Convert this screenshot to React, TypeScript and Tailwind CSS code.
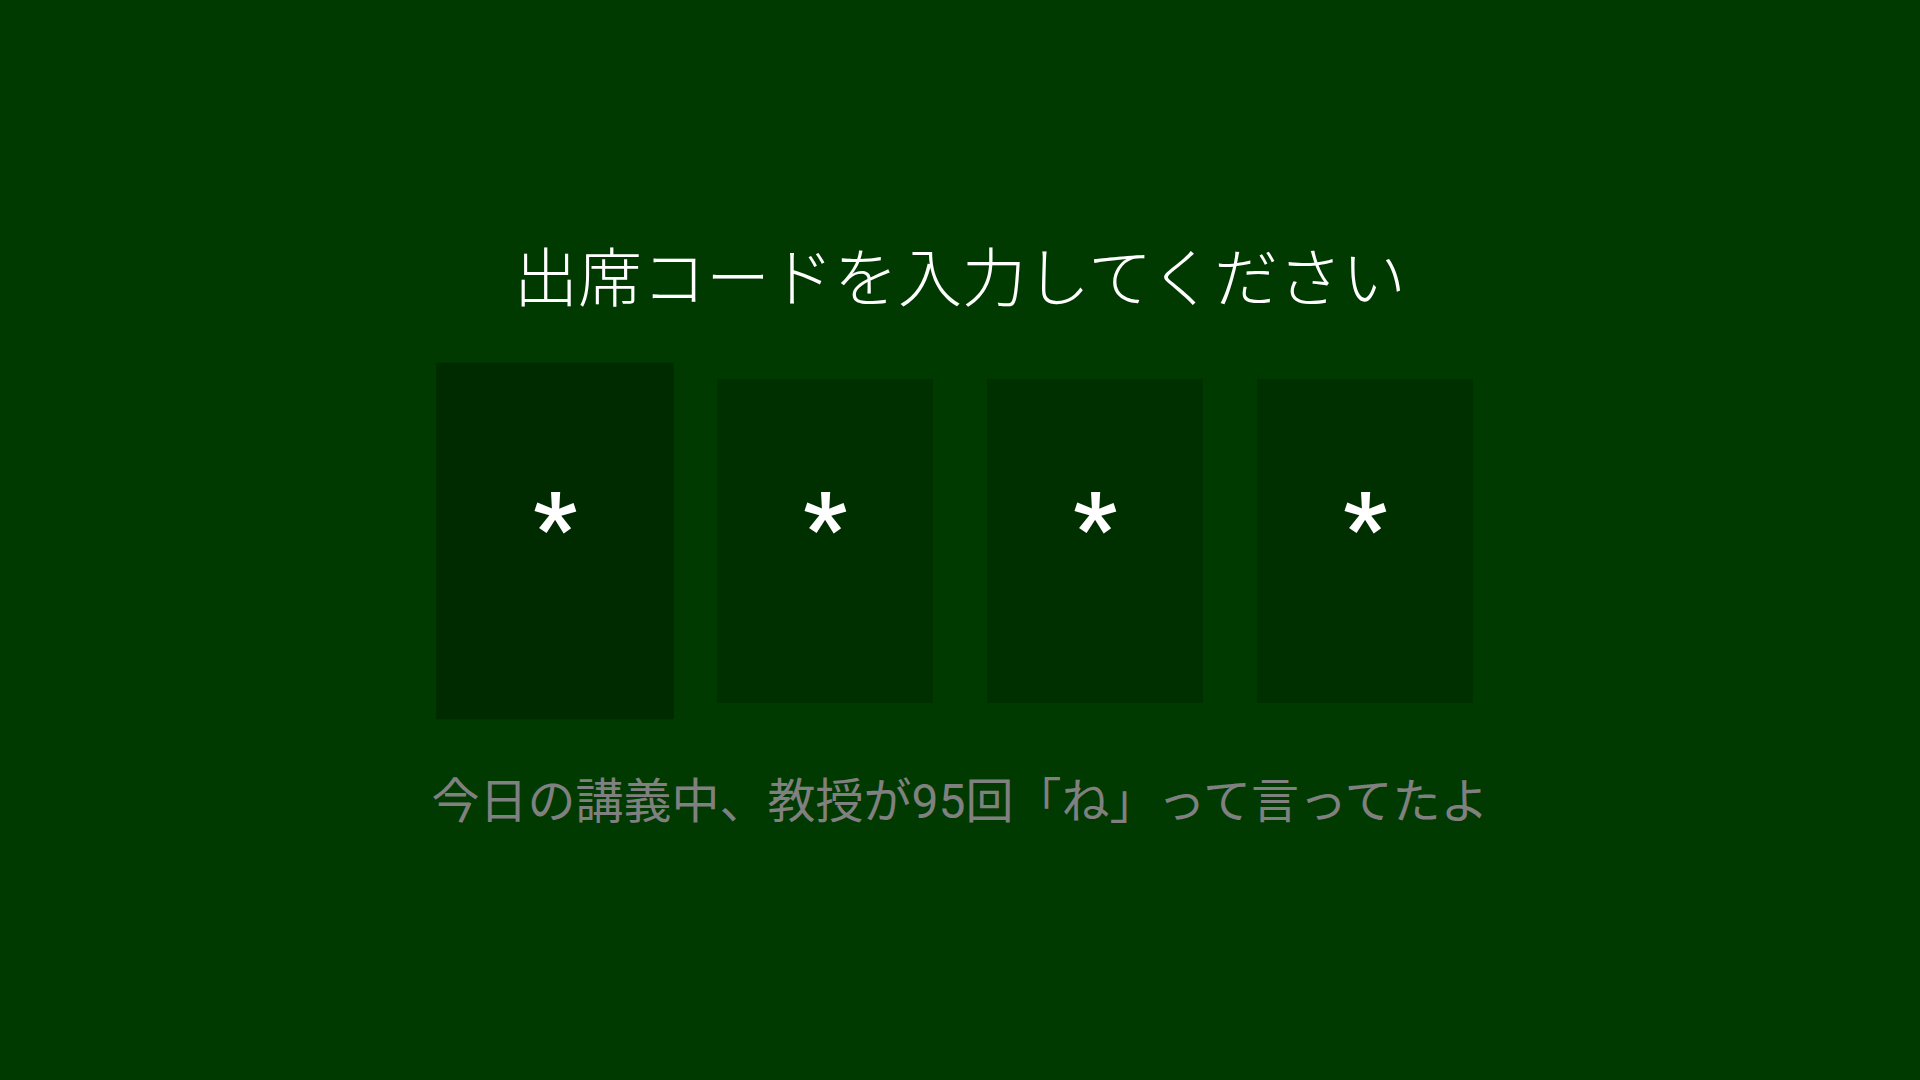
const digits = ["*", "*", "*", "*"];

function CodeBox({ value, active }: { value: string; active: boolean }) {
  return (
    <div className="relative flex h-[324px] w-[216px] items-center justify-center">
      <div className={`absolute inset-0 ${active ? "scale-110 bg-[#002a00]" : "bg-[#003000]"}`} />
      <span className="relative mb-[25px] text-[96px] font-bold leading-none text-white">{value}</span>
    </div>
  );
}

export default function App() {
  return (
    <div
      className="flex h-screen w-full flex-col items-center justify-center bg-[#003a00] pb-[7px]"
      style={{ fontFamily: 'Roboto, "Noto Sans CJK JP", sans-serif' }}
    >
      <h1 className="mb-[67px] text-[64px] font-light leading-none text-white">
        出席コードを入力してください
      </h1>
      <div className="flex gap-[54px]">
        {digits.map((d, i) => (
          <CodeBox key={i} value={d} active={i === 0} />
        ))}
      </div>
      <p className="mt-[75px] text-[48px] font-normal leading-none text-[#808080]">
        今日の講義中、教授が95回「ね」って言ってたよ
      </p>
    </div>
  );
}
